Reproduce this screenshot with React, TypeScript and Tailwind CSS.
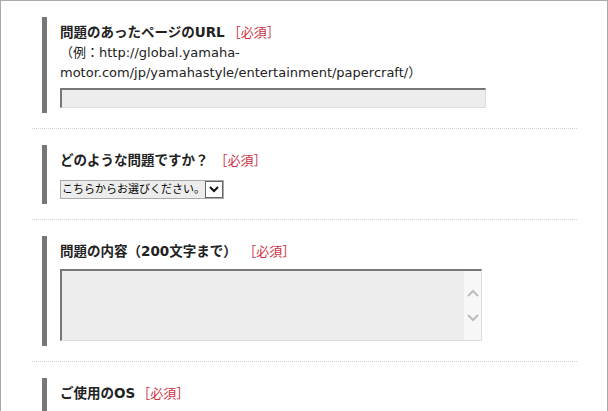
import type { FC, ReactNode } from "react";

const font = {
  fontFamily: '"DejaVu Sans", "Noto Sans CJK JP", sans-serif'
};

const Section: FC<{
  title: string;
  gap: string;
  children?: ReactNode;
  last?: boolean;
}> = ({ title, gap, children, last }) => (
  <div
    className={
      last
        ? "px-[10px] pt-4"
        : "px-[10px] pt-4 pb-[15px] border-b border-dotted border-[#cfcfcf]"
    }
  >
    <div className="border-l-[5px] border-[#777] pl-[13px] pt-[5px] pb-[5px]">
      <p className="text-[13.5px] leading-[20px] font-bold text-[#222] whitespace-nowrap">
        {title}
        <span className={gap + " font-normal text-[13px] text-[#cc2f3f]"}>［必須］</span>
      </p>
      {children}
    </div>
  </div>
);

const Chevron: FC<{ up?: boolean }> = ({ up }) => (
  <svg width="12" height="8" viewBox="0 0 12 8" className="block">
    <path
      d={up ? "M1 7 L6 2 L11 7" : "M1 1 L6 6 L11 1"}
      fill="none"
      stroke="#bdbdbd"
      strokeWidth="2"
    />
  </svg>
);

export default function App() {
  return (
    <div
      className="w-[608px] h-[411px] overflow-hidden bg-white border-t border-l border-r border-[#aaa]"
      style={font}
    >
      <div className="ml-[31px] mr-[30px]">
        <Section title="問題のあったページのURL" gap="ml-[3px]">
          <p className="text-[13px] leading-[19.5px] text-[#222] whitespace-nowrap">
            （例：http://global.yamaha-
            <br />
            motor.com/jp/yamahastyle/entertainment/papercraft/）
          </p>
          <div className="mt-[6px] w-[426px] h-[20px] bg-[#ededed] border-t-2 border-l-2 border-r border-b border-t-[#777] border-l-[#777] border-r-[#ddd] border-b-[#ddd]" />
        </Section>

        <Section title="どのような問題ですか？" gap="ml-[6px]">
          <div className="mt-[9px] w-[164px] h-[19px] flex items-center bg-[#ececec] border border-[#aaa] pl-[1px]">
            <span className="text-[11px] leading-none text-black whitespace-nowrap flex-1">
              こちらからお選びください。
            </span>
            <div className="w-[19px] h-[17px] bg-white border border-[#666] flex items-center justify-center">
              <svg width="10" height="7" viewBox="0 0 10 7">
                <path d="M1 1 L5 5 L9 1" fill="none" stroke="#111" strokeWidth="2" />
              </svg>
            </div>
          </div>
        </Section>

        <Section title="問題の内容（200文字まで）" gap="ml-[13px]">
          <div className="mt-[7px] w-[422px] h-[72px] flex bg-[#ededed] border-t-2 border-l-2 border-r border-b border-t-[#777] border-l-[#777] border-r-[#ddd] border-b-[#ddd]">
            <div className="flex-1" />
            <div className="w-[17px] bg-[#f7f7f7] flex flex-col items-center pt-[18px] gap-[17px]">
              <Chevron up />
              <Chevron />
            </div>
          </div>
        </Section>

        <Section title="ご使用のOS" gap="ml-[2px]" last>
          <div className="h-[40px]" />
        </Section>
      </div>
    </div>
  );
}
